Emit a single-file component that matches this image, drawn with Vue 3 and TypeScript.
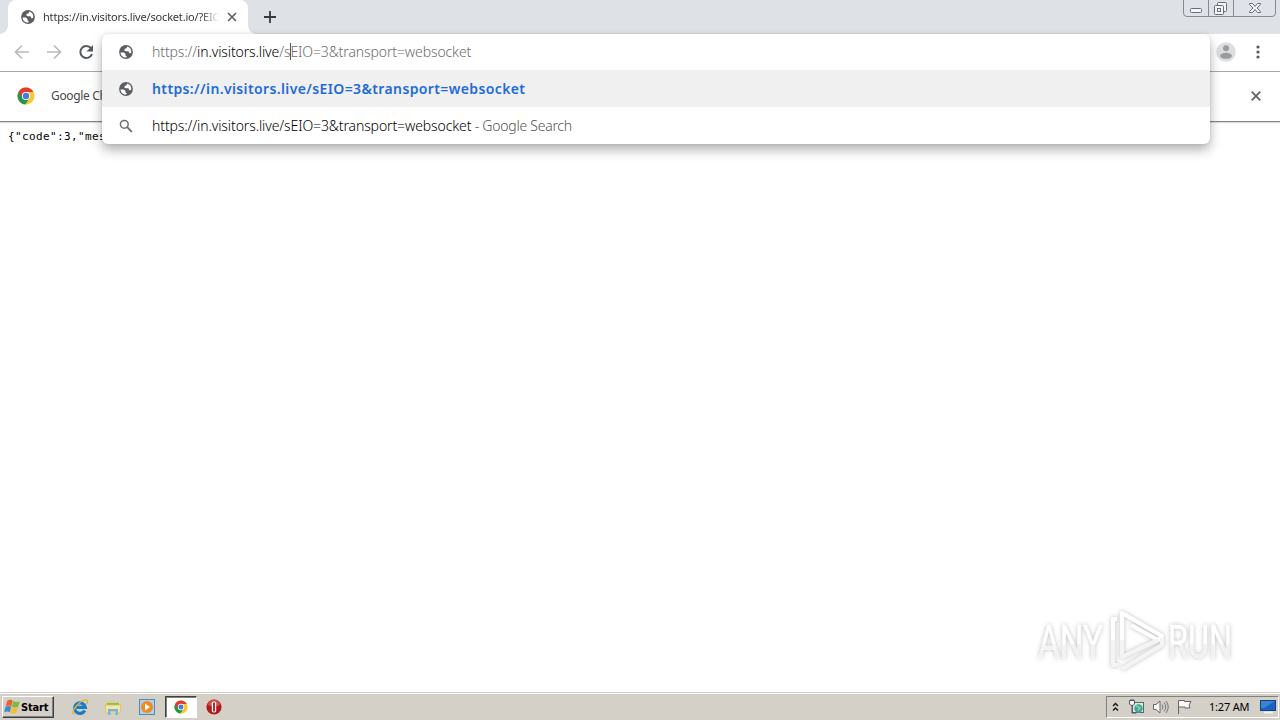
<script setup lang="ts">
interface Suggestion { kind: 'globe' | 'search'; text: string; suffix: string; active: boolean }
const suggestions: Suggestion[] = [
  { kind: 'globe', text: 'https://in.visitors.live/sEIO=3&transport=websocket', suffix: '', active: true },
  { kind: 'search', text: 'https://in.visitors.live/sEIO=3&transport=websocket', suffix: ' - Google Search', active: false },
]
</script>

<template>
  <div class="screen">
    <svg class="defs" width="0" height="0">
      <symbol id="globe" viewBox="0 0 14 14">
        <circle cx="7" cy="7" r="6.900" fill="#5b5f63" />
        <path d="M1.500 7.400h3.300l1.700 1.700v1.300l1.300 1.200-.5 1C4 12.600 1.600 10.400 1.500 7.400zM8.300 1.600l-.8 1.700-2 .8v1.700l1.500.5h2.400l1 2 1.700-.4c.7-2.900-.9-5.500-3.800-6.300z" fill="#fff" />
      </symbol>
      <symbol id="chrome" viewBox="0 0 18 18">
        <circle cx="9" cy="9" r="8.500" fill="#fbc72a" />
        <path d="M9 9 1.650 4.750A8.500 8.500 0 0 0 8.400 17.500L12.500 11z" fill="#26964d" />
        <path d="M1.650 4.750A8.500 8.500 0 0 1 16.400 5H9L5.500 11z" fill="#e33b2e" />
        <circle cx="9" cy="9" r="4.100" fill="#fff" />
        <circle cx="9" cy="9" r="3.200" fill="#3f7de0" />
      </symbol>
    </svg>

    <header class="tabstrip">
      <div class="tab">
        <svg class="tab-globe"><use href="#globe" /></svg>
        <span class="tab-title">https://in.visitors.live/socket.io/?EIO</span>
        <svg class="tab-close" viewBox="0 0 10 10"><path d="m1 1 8 8M9 1 1 9" /></svg>
      </div>
      <svg class="new-tab" viewBox="0 0 12 12"><path d="M6 0v12M0 6h12" /></svg>
      <svg class="caption" width="94" height="18" viewBox="0 0 94 18">
        <path d="M.5 0v13q0 3.500 3.500 3.500h85q3.500 0 3.500-3.500V0M25.500 0v16M50.500 0v16" fill="#dfe2e8" stroke="#858992" />
        <g fill="#f4f5f7" stroke="#686c75">
          <rect x="7.500" y="8.500" width="11" height="4" rx="1" />
          <rect x="34.500" y="2.500" width="9" height="9" rx="1" /><rect x="31.500" y="5.500" width="9" height="9" rx="1" /><rect x="34.500" y="8.500" width="3" height="3" />
          <path d="M66.500 3.500h3l2.500 3 2.500-3h3v1l-3.500 3.500 3.500 3.500v1h-3l-2.500-3-2.500 3h-3v-1l3.500-3.500-3.500-3.500z" />
        </g>
      </svg>
    </header>

    <nav class="toolbar">
      <svg width="102" height="36" viewBox="0 0 102 36" fill="none" stroke-width="1.700">
        <path d="M29 18H16M22 11.500 15.500 18l6.500 6.500M47 18h13M54 11.500l6.500 6.500-6.500 6.500" stroke="#b9bbbd" />
        <path d="M91 14.200A6 6 0 1 0 92 20" stroke="#55595e" stroke-width="2" /><path d="M93 11v6.500h-6.500z" fill="#55595e" />
      </svg>
      <div class="tools">
        <svg width="20" height="20" viewBox="0 0 20 20"><circle cx="10" cy="10" r="9.800" fill="#dddedf" /><circle cx="10" cy="6.300" r="3" fill="#999b9d" /><ellipse cx="10" cy="13.800" rx="6" ry="3" fill="#999b9d" /></svg>
        <svg class="dots" width="4" height="16" viewBox="0 0 4 16" fill="#55595e"><circle cx="2" cy="3" r="1.600" /><circle cx="2" cy="8" r="1.600" /><circle cx="2" cy="13" r="1.600" /></svg>
      </div>
    </nav>

    <section class="infobar">
      <svg class="chrome-icon"><use href="#chrome" /></svg>
      <span class="info-text">Google Ch</span>
      <svg class="info-close" viewBox="0 0 10 10"><path d="m.7.7 8.600 8.600M9.300.7.7 9.300" /></svg>
    </section>

    <main class="page"><pre>{"code":3,"mes</pre></main>

    <div class="omnibox">
      <div class="row input">
        <svg class="row-icon"><use href="#globe" /></svg>
        <span class="url"><span>https://</span><b>in.visitors.live</b><span>/s</span><i class="caret" /><span>EIO=3&amp;transport=websocket</span></span>
      </div>
      <div v-for="s in suggestions" :key="s.kind" class="row" :class="{ active: s.active }">
        <svg v-if="s.kind === 'globe'" class="row-icon"><use href="#globe" /></svg>
        <svg v-else class="row-icon" viewBox="0 0 14 14" fill="none" stroke="#6b6f73"><circle cx="5.300" cy="5.300" r="3.900" stroke-width="1.500" /><path d="m8.200 8.200 4.600 4.600" stroke-width="1.900" /></svg>
        <span class="match">{{ s.text }}</span><span v-if="s.suffix" class="suffix">{{ s.suffix }}</span>
      </div>
    </div>

    <div class="watermark">
      <svg width="210" height="76" viewBox="0 0 210 76">
        <defs><linearGradient id="mark-fill" x2="0" y2="1"><stop offset=".54" stop-color="#fff" /><stop offset=".56" stop-color="#f1f1f1" /></linearGradient></defs>
        <g class="mark-shadow">
          <text x="8" y="56" textLength="65" lengthAdjust="spacingAndGlyphs">ANY</text>
          <text x="138" y="56" textLength="64" lengthAdjust="spacingAndGlyphs">RUN</text>
          <g fill="none" stroke="#fff" stroke-width="4.200" stroke-linejoin="round">
            <path d="M92 38V11l40 23-4 4-27-15M87 17h-4v21" />
            <path d="M83 38v25h5M92 38v17l36-17M92 67l40-24v-7" stroke="#f4f4f4" />
          </g>
        </g>
      </svg>
    </div>

    <footer class="taskbar">
      <div class="start">
        <svg width="17" height="16" viewBox="0 0 17 16"><path d="M3.200 1.800q3-2 5.600 0L7.300 7.300q-2.600-1.700-5.500-.2z" fill="#e5642f" /><path d="M9.300 2.200q3.200 1.600 6.500 0L14.200 7.800q-3.200 1.500-6.300 0z" fill="#7fb845" /><path d="M1.500 7.800q3-1.500 5.700 0l-1.400 5.500q-2.700-1.600-5.600 0z" fill="#3e8bc8" /><path d="M7.800 8.300q3.200 1.600 6.200 0L12.500 13.900q-3.200 1.500-6.200-.2z" fill="#f2bd38" /></svg>
        <span>Start</span>
      </div>
      <svg class="ie" width="18" height="18" viewBox="0 0 18 18" fill="none"><path d="M13.800 12.500A5.400 5.200 0 1 1 14.300 9.300H5.500" stroke="#1b7cc4" stroke-width="3.200" /><path d="M3 16.500C-1.500 14 10 .5 16 2q1.500.7-.5 4" stroke="#dcb53c" stroke-width="1.300" /></svg>
      <svg class="folder" width="18" height="18" viewBox="0 0 18 18"><path d="M2 3h5l1 1h7v10H2z" fill="#e9cf6b" /><path d="M3 5h12v2H3z" fill="#83bf65" /><path d="M1 7h16l-1 8H2z" fill="#f6e6a1" stroke="#d8b84f" stroke-width=".7" /><path d="M4 17v-6h10v6h-2.500v-3.500h-5V17z" fill="#71b7df" /></svg>
      <svg class="media" width="16" height="16" viewBox="0 0 16 16"><rect x=".5" y=".5" width="15" height="15" fill="#acd2ef" stroke="#5487bd" /><circle cx="8" cy="8" r="6" fill="#f28b19" /><path d="m6 4.500 5 3.500-5 3.500z" fill="#fff" /></svg>
      <div class="task-active"><svg width="14" height="14" viewBox="0 0 14 14"><use href="#chrome" width="14" height="14" /></svg></div>
      <svg class="opera" width="16" height="16" viewBox="0 0 16 16"><circle cx="8" cy="8" r="7.600" fill="#b5181c" /><path d="M2 6a6 5.500 0 0 1 12 0q-6 3-12 0" fill="#cf5053" /><rect x="5.800" y="2.500" width="4.400" height="11" rx="1.800" fill="#fff" /><rect x="7.100" y="3.300" width="1.800" height="9.400" rx=".9" fill="#a3181c" /></svg>
      <div class="tray">
        <svg class="chevrons" width="7" height="10" viewBox="0 0 7 10"><path d="m1 4 2.500-2.500L6 4M1 8.500 3.500 6 6 8.500" fill="none" stroke="#111" stroke-width="1.400" /></svg>
        <svg class="net" width="17" height="16" viewBox="0 0 17 16"><rect x="4.500" y="3.500" width="11" height="10" fill="#d9eee6" stroke="#536b6d" /><circle cx="10.500" cy="9.500" r="4.200" fill="#42a1a1" /><path d="M8 7 12 8.500l-2 3" fill="none" stroke="#8ed188" stroke-width="1.500" /><path d="M1.500 1.500h5V5q-1 1.500-2.500 1.500T1.500 5z" fill="#f5f5f5" stroke="#555" /><path d="M4 6.500V14h4M3 0v2M5 0v2" fill="none" stroke="#555" /></svg>
        <svg class="volume" width="17" height="16" viewBox="0 0 17 16" fill="none" stroke="#777"><path d="M1.500 5.500H4L8 2v12l-4-3.500H1.500z" fill="#f7f7f7" stroke="#666" /><path d="M10 5.500q2 2.500 0 5M12 3.500q3.500 4.500 0 9M14 2q4.500 6 0 12" /></svg>
        <svg class="flag" width="17" height="16" viewBox="0 0 17 16"><path d="M2.500 15V1.500h6v1h6.500l-2 3.500 1 3H9V8H2.500" fill="#fafafa" stroke="#666" /></svg>
        <time>1:27 AM</time>
        <svg class="desktop" width="16" height="14" viewBox="0 0 16 14"><rect x=".5" y=".5" width="15" height="10" fill="#1765c0" stroke="#16417e" /><path d="M1 1h14L4 8H1z" fill="#3984d0" /><path d="M4 12.500h9" stroke="#edf4f9" stroke-width="2" /></svg>
      </div>
    </footer>
  </div>
</template>

<style>
body { margin: 0; overflow: hidden; }
</style>

<style scoped>
* { box-sizing: border-box; }
svg { display: block; flex: none; }
.screen { position: relative; display: flex; flex-direction: column; width: 1280px; height: 720px; overflow: hidden; background: #fff; font-family: "Noto Sans", "DejaVu Sans", sans-serif; white-space: pre; }
.defs { position: absolute; }
.tabstrip { display: flex; height: 34px; flex: none; background: #dee1e6; }
.tab { position: relative; display: flex; align-items: center; width: 240px; height: 34px; margin-left: 8px; padding-left: 13px; border-radius: 8px 8px 0 0; background: #fff; }
.tab::before, .tab::after { content: ""; position: absolute; bottom: 0; width: 8px; height: 8px; }
.tab::before { left: -8px; background: radial-gradient(circle at 0 0, transparent 7.5px, #fff 8px); }
.tab::after { right: -8px; background: radial-gradient(circle at 100% 0, transparent 7.5px, #fff 8px); }
.tab-globe { width: 14px; height: 14px; }
.tab-title { width: 176px; margin-left: 8px; font-size: 11px; line-height: 18px; letter-spacing: -.18px; color: #333639; -webkit-mask-image: linear-gradient(90deg, #000 158px, transparent 176px); }
.tab-close { width: 10px; height: 10px; margin-left: 8px; fill: none; stroke: #5f6368; stroke-width: 1.700; }
.new-tab { width: 12px; height: 12px; margin: 11px 0 0 16px; stroke: #36393d; stroke-width: 1.800; }
.caption { margin-left: auto; margin-right: 3px; }
.toolbar { display: flex; justify-content: space-between; height: 38px; flex: none; border-bottom: 1px solid #a8a8a8; background: #fff; }
.tools { display: flex; align-items: center; gap: 20px; padding-right: 20px; height: 36px; }
.infobar { display: flex; align-items: center; height: 50px; flex: none; padding: 0 19px 1px 17px; border-bottom: 1px solid #858585; background: #fff; box-shadow: 0 1px 1px #ddd; }
.chrome-icon { width: 18px; height: 18px; }
.info-text { margin-left: 16px; margin-top: -1px; font-size: 12px; letter-spacing: -.35px; color: #47494c; }
.info-close { width: 10px; height: 10px; margin-left: auto; fill: none; stroke: #5f6368; stroke-width: 1.800; }
.page { flex: 1; padding: 7px 8px; }
pre { margin: 0; font: 11px/16px "DejaVu Sans Mono", monospace; letter-spacing: .38px; color: #000; }
.omnibox { position: absolute; left: 102px; top: 34px; width: 1108px; height: 110px; border-radius: 6px; background: #fff; box-shadow: 0 6px 12px rgba(0,0,0,.3), 0 0 3px rgba(0,0,0,.12); }
.row { display: flex; align-items: center; height: 37px; padding-left: 17px; font-size: 14px; font-weight: 300; letter-spacing: -.11px; color: #000; }
.row.input { height: 36px; padding-bottom: 1px; }
.row.active { background: #f0f0f0; color: #1f6bd8; font-weight: 600; letter-spacing: .38px; }
.row-icon { width: 14px; height: 14px; margin-right: 19px; }
.url { display: flex; color: #6c6c6c; }
.url b { font-weight: 300; letter-spacing: -.12px; color: #000; }
.caret { width: 1px; height: 17px; margin: 1px -1px 0 0; background: #555; }
.suffix { letter-spacing: -.25px; color: #555; }
.watermark { position: absolute; left: 1030px; top: 602px; }
.watermark text { font: 400 47px "Roboto", sans-serif; fill: url(#mark-fill); stroke: #fff; stroke-width: .5; }
.mark-shadow { filter: drop-shadow(0 0 2px rgba(0,0,0,.26)); }
.taskbar { display: flex; align-items: center; height: 28px; flex: none; border-top: 1px solid #d4d0c8; box-shadow: inset 0 1px #fff; background: #d4d0c8; padding-left: 2px; }
.start { display: flex; align-items: center; width: 52px; height: 22px; margin-top: 1px; padding-left: 1px; border: 1px solid; border-color: #fff #404040 #404040 #fff; box-shadow: inset -1px -1px #808080; font: 700 11px "DejaVu Sans Condensed", "DejaVu Sans", sans-serif; letter-spacing: -.15px; }
.ie { margin-left: 17px; }
.folder { margin-left: 15px; }
.media { margin-left: 17px; }
.task-active { display: flex; align-items: center; justify-content: center; width: 32px; height: 22px; margin-left: 10px; border: 1px solid; border-color: #404040 #fff #fff #404040; background: #fff; box-shadow: inset 1px 1px #808080; }
.opera { margin-left: 9px; }
.tray { display: flex; align-items: center; width: 173px; height: 22px; margin-left: auto; margin-right: 1px; border: 1px solid; border-color: #808080 #fff #fff #808080; }
.chevrons { margin-left: 5px; }
.net { margin-left: 9px; }
.volume { margin-left: 7px; }
.flag { margin-left: 7px; }
time { width: 41px; margin-left: 16px; font-size: 11px; line-height: 20px; letter-spacing: -.2px; }
.desktop { margin-left: 10px; }
</style>
